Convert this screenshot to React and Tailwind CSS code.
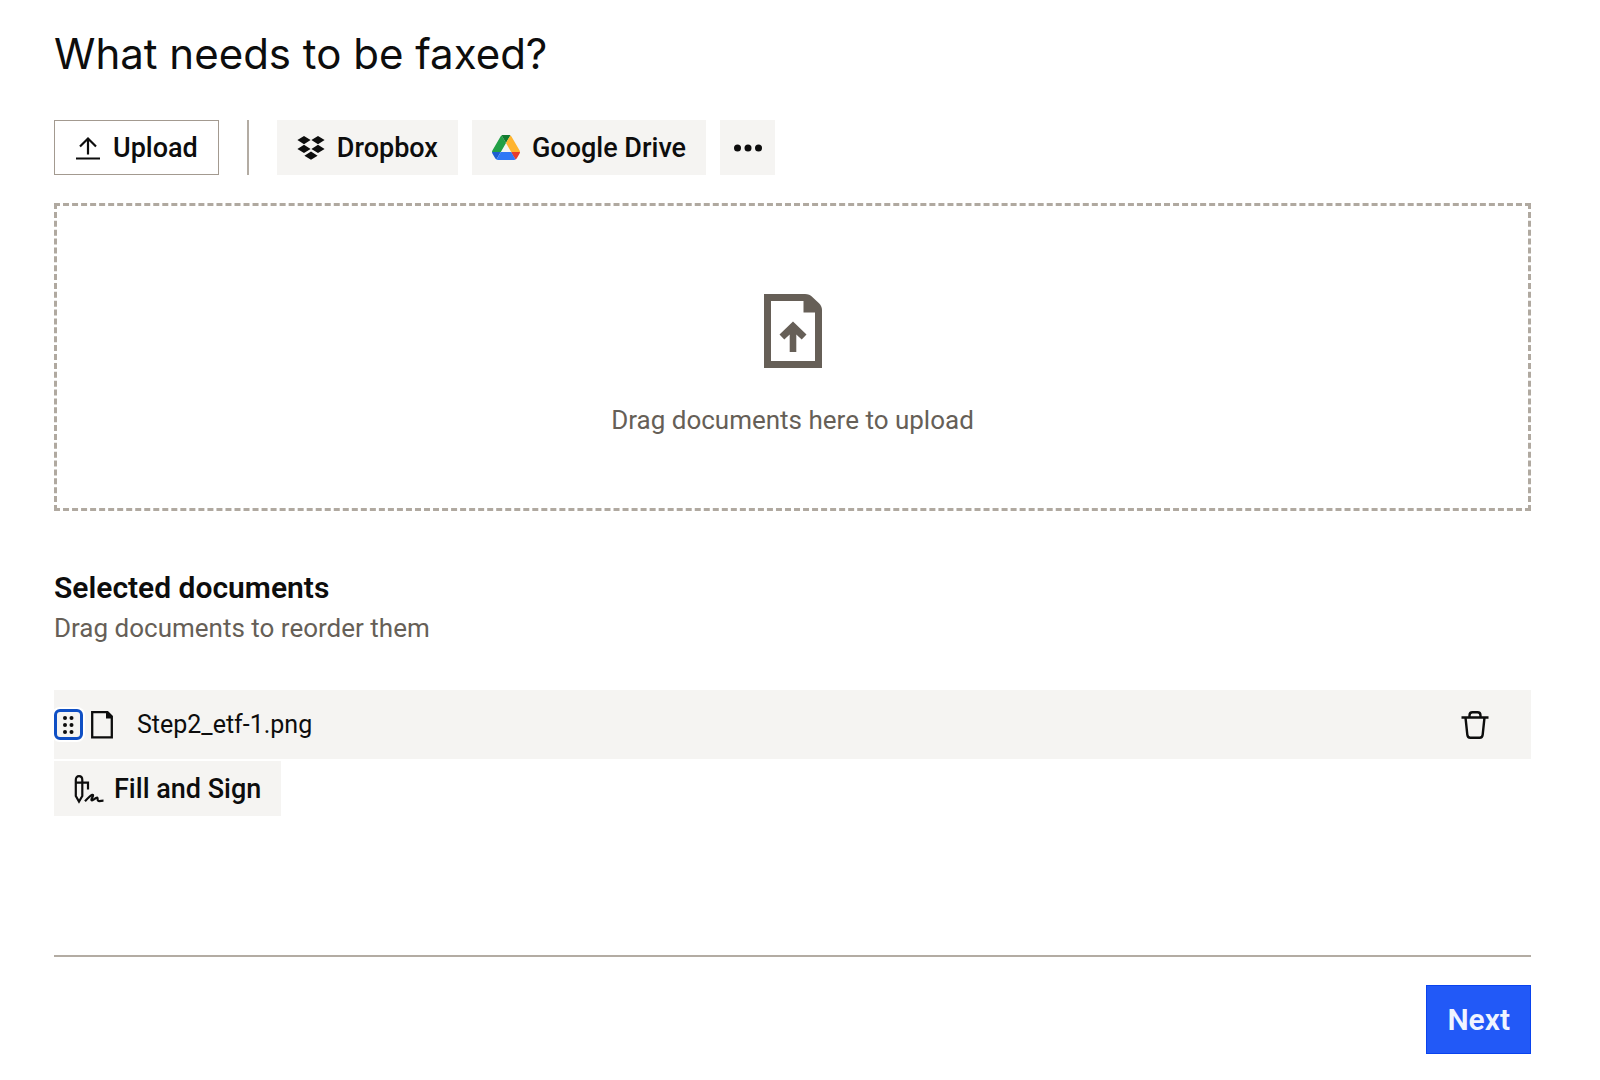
function UploadIcon() {
  return (
    <svg className="h-6 w-6.5" viewBox="0 0 26 24" fill="none" stroke="currentColor" strokeWidth="2.2" aria-hidden="true">
      <path d="M13 18.5V3M5 10.5l8-8 8 8M1 22.5h24" />
    </svg>
  );
}

function DropboxIcon() {
  return (
    <svg className="h-6 w-7" viewBox="0 0 28 24" fill="currentColor" aria-hidden="true">
      <path d="M7 0l6.600 4.100L7 8.200.4 4.100zM21 0l6.600 4.100L21 8.200l-6.600-4.100zM7 8.800l6.600 4.100L7 17 .4 12.900zM21 8.800l6.600 4.100L21 17l-6.600-4.100zM14 15.600l6.600 4.100-6.600 4.100-6.600-4.100z" />
    </svg>
  );
}

function DriveIcon() {
  return (
    <svg className="h-[25px] w-7" viewBox="0 0 87.3 78" aria-hidden="true">
      <path d="m6.6 66.85 3.85 6.65c.8 1.4 1.95 2.5 3.3 3.3l13.75-23.8h-27.5c0 1.55.4 3.1 1.2 4.5z" fill="#1e5fd0" />
      <path d="m43.65 25-13.75-23.8c-1.35.8-2.5 1.9-3.3 3.3l-25.4 44a9.06 9.06 0 0 0 -1.2 4.5h27.5z" fill="#22a046" />
      <path d="m73.55 76.8c1.35-.8 2.5-1.9 3.3-3.3l1.6-2.75 7.65-13.25c.8-1.4 1.2-2.95 1.2-4.5h-27.502l5.852 11.5z" fill="#e53c2c" />
      <path d="m43.65 25 13.75-23.8c-1.35-.8-2.9-1.2-4.5-1.2h-18.5c-1.6 0-3.15.45-4.5 1.2z" fill="#117a30" />
      <path d="m59.8 53h-32.3l-13.75 23.8c1.35.8 2.9 1.2 4.5 1.2h50.8c1.6 0 3.15-.45 4.5-1.2z" fill="#2f78f6" />
      <path d="m73.4 26.5-12.7-22c-.8-1.4-1.95-2.5-3.3-3.3l-13.75 23.8 16.15 28h27.45c0-1.55-.4-3.1-1.2-4.5z" fill="#ffb42e" />
    </svg>
  );
}

function DotsIcon() {
  return (
    <svg className="h-2 w-7" viewBox="0 0 28 8" fill="currentColor" aria-hidden="true">
      <circle cx="3.5" cy="4" r="3.5" />
      <circle cx="14" cy="4" r="3.5" />
      <circle cx="24.5" cy="4" r="3.5" />
    </svg>
  );
}

function DocumentUploadIcon() {
  return (
    <svg className="h-[74px] w-[58px]" viewBox="0 0 58 74" fill="currentColor" aria-hidden="true">
      <path fillRule="evenodd" d="M0 0H41c3 0 5.500 1.200 7.600 3.200L55 9.200C57 11.200 58 13.400 58 16V74H0zM7 7V67H51V18.500H39.500V7z" />
      <path d="M29 27.500 42.500 40.500 37.700 45.500 32.300 40.400V58H25.700V40.400L20.300 45.500 15.500 40.500z" />
    </svg>
  );
}

function GripIcon() {
  return (
    <svg className="h-[18px] w-3" viewBox="0 0 12 18" fill="currentColor" aria-hidden="true">
      {[2, 9, 16].map((y) => (
        <g key={y}>
          <circle cx="2" cy={y} r="2" />
          <circle cx="8.500" cy={y} r="2" />
        </g>
      ))}
    </svg>
  );
}

function FileIcon() {
  return (
    <svg className="h-7 w-[22px]" viewBox="0 0 22 28" aria-hidden="true">
      <path d="M1.200 1.200H16.500L20.800 5.500V26.300H1.200z" fill="none" stroke="currentColor" strokeWidth="2.300" />
      <path d="M15 1H17L21 5V7.500H15z" fill="currentColor" />
    </svg>
  );
}

function TrashIcon() {
  return (
    <svg className="h-7 w-7" viewBox="0 0 28 28" fill="none" stroke="currentColor" strokeWidth="2.400" aria-hidden="true">
      <path d="M.500 6.500H27.500M8.500 6.500V4.500C8.500 2.600 9.600 1.300 11.500 1.300H16.500C18.400 1.300 19.500 2.600 19.500 4.500V6.500M4.500 6.500L6.300 23.600C6.500 25.600 7.500 26.700 9.300 26.700H18.700C20.500 26.700 21.500 25.600 21.700 23.600L23.500 6.500" />
    </svg>
  );
}

function SignIcon() {
  return (
    <svg className="h-7 w-7 overflow-visible" viewBox="0 0 28 28" fill="none" stroke="currentColor" strokeWidth="2.200" aria-hidden="true">
      <path d="M1.800 5C1.800 2.600 3 1.200 5 1.200S8.300 2.600 8.300 5V21L5 26.500 1.800 21zM1.800 7.600H14V14.500" />
      <path d="M11 26.300C13.500 23.500 16.500 20.500 18.300 19.800 20 19.500 18.500 22 17.600 24 17 25.800 18.200 25.500 19.500 24.600 21 23.500 22.500 22.300 23.300 22.700 24.200 23.300 22.800 25.500 24.500 26 26 26.300 27.500 25.700 29.500 25.700" />
    </svg>
  );
}

function GrayButton({ icon, children }) {
  return (
    <button type="button" className="flex h-[55px] items-center gap-3 bg-[#f5f4f2] px-5 text-[27px] leading-8 font-medium">
      {icon}
      {children}
    </button>
  );
}

export default function App() {
  return (
    <main className="min-h-screen bg-white pt-7 pr-[69px] pb-6 pl-[54px] font-['Roboto',sans-serif] text-[#0d0d0d]">
      <h1 className="font-['Inter',sans-serif] text-[42px] leading-[52px]">What needs to be faxed?</h1>

      <div className="mt-10 flex items-stretch">
        <button type="button" className="flex h-[55px] items-center gap-3 border border-[#a39a90] px-5 text-[27px] leading-8 font-medium">
          <UploadIcon />
          Upload
        </button>
        <div className="mx-7 w-0.5 bg-[#b3aca3]" />
        <div className="flex gap-3.5">
          <GrayButton icon={<DropboxIcon />}>Dropbox</GrayButton>
          <GrayButton icon={<DriveIcon />}>Google Drive</GrayButton>
          <button type="button" aria-label="More sources" className="flex h-[55px] w-[55px] items-center justify-center bg-[#f5f4f2]">
            <DotsIcon />
          </button>
        </div>
      </div>

      <section className="mt-7 flex h-[308px] flex-col items-center border-3 border-dashed border-[#b0a9a0] pt-[88px] text-[#665f57]">
        <DocumentUploadIcon />
        <p className="mt-9 text-[26px] leading-8">Drag documents here to upload</p>
      </section>

      <section>
        <h2 className="mt-[57px] text-[30px] leading-10 font-semibold">Selected documents</h2>
        <p className="text-[26px] leading-10 text-[#665f57]">Drag documents to reorder them</p>
        <ul className="mt-[42px]">
          <li className="flex h-[69px] items-center bg-[#f5f4f2] pr-[42px]">
            <button
              type="button"
              aria-label="Reorder Step2_etf-1.png"
              className="flex h-[31px] w-[29px] items-center justify-center rounded-md border-3 border-[#0f4fc4] bg-[#f5f4f2] ring-2 ring-white"
            >
              <GripIcon />
            </button>
            <span className="ml-2 flex">
              <FileIcon />
            </span>
            <span className="ml-6 flex-1 text-[25px] leading-8">Step2_etf-1.png</span>
            <button type="button" aria-label="Delete Step2_etf-1.png">
              <TrashIcon />
            </button>
          </li>
        </ul>
        <div className="mt-0.5 flex">
          <GrayButton icon={<SignIcon />}>Fill and Sign</GrayButton>
        </div>
      </section>

      <footer className="mt-[139px] flex justify-end border-t-2 border-[#b3aca3] pt-7">
        <button type="button" className="h-[69px] border border-[#0a43ee] bg-[#2259f7] px-5 text-[30px] leading-9 font-semibold text-[#f0f4ff]">
          Next
        </button>
      </footer>
    </main>
  );
}
